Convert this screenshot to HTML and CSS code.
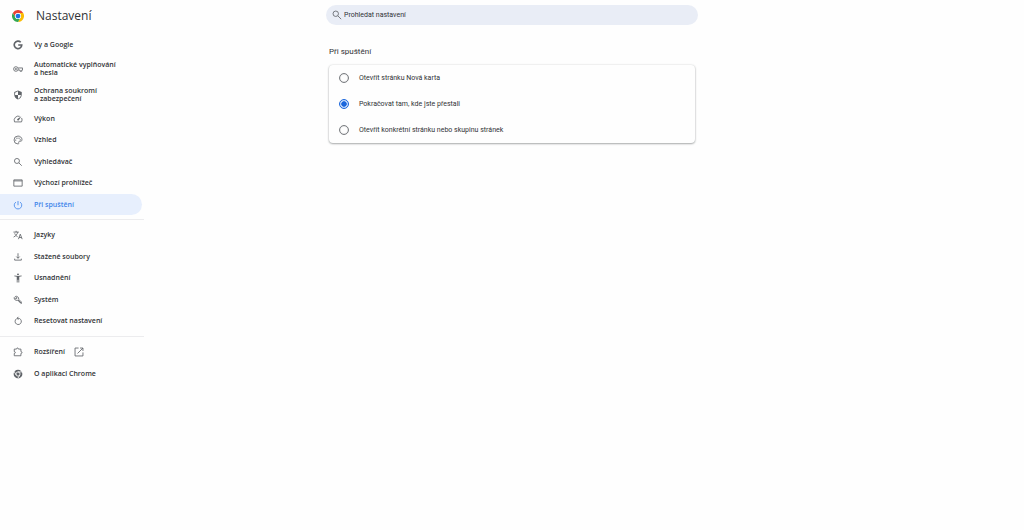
FILE: index.html
```html
<!DOCTYPE html>
<html lang="cs">
<head>
    <meta charset="UTF-8">
    <meta name="viewport" content="width=device-width, initial-scale=1.0">
    <title>Nastavení – Při spuštění</title>
    <link rel="stylesheet" href="styles.css">
</head>
<body>
    <div class="page">
        <aside class="sidebar">
            <div class="brand">
                <svg class="logo" viewBox="0 0 48 48">
                    <path fill="#ea4335" d="M3.2 12A24 24 0 0 1 44.8 12H24A12 12 0 0 0 13.6 30z"/>
                    <path fill="#fbbc04" d="M44.8 12A24 24 0 0 1 24 48L34.4 30A12 12 0 0 0 24 12z"/>
                    <path fill="#34a853" d="M24 48A24 24 0 0 1 3.2 12L13.6 30A12 12 0 0 0 34.4 30z"/>
                    <circle cx="24" cy="24" r="12" fill="#fff"/>
                    <circle cx="24" cy="24" r="9.5" fill="#1a73e8"/>
                </svg>
                <h1>Nastavení</h1>
            </div>

            <nav class="menu">
                <div class="menu-group menu-main">
                    <a href="#google" class="menu-item">
                        <svg class="icon line bold" viewBox="0 0 24 24"><path d="M18.500 5.500A9 9 0 1 0 21 12h-8.500"/></svg>
                        <span>Vy a Google</span>
                    </a>
                    <a href="#autofill" class="menu-item">
                        <svg class="icon line" viewBox="0 0 24 24"><circle cx="7" cy="12" r="5.500"/><circle cx="7" cy="12" r="1.500"/><path d="M12.500 9.500H23v5h-2v3h-4v-3h-4.500"/></svg>
                        <span>Automatické vyplňování<br>a hesla</span>
                    </a>
                    <a href="#privacy" class="menu-item">
                        <svg class="icon" viewBox="0 0 24 24"><path d="M12 1L3 5v6c0 5.550 3.840 10.740 9 12 5.160-1.260 9-6.450 9-12V5l-9-4zm0 11h7c-.53 4.100-3.280 7.800-7 8.900V12H5V6.300l7-3.100V12z"/></svg>
                        <span>Ochrana soukromí<br>a zabezpečení</span>
                    </a>
                    <a href="#performance" class="menu-item">
                        <svg class="icon line" viewBox="0 0 24 24"><path d="M16 5.600A10 10 0 0 0 3.600 19h16.800a10 10 0 0 0 .3-9.500"/><path class="solid" d="M20 5.500l-6 9.500a2.300 2.300 0 0 1-3.400-3.300z"/></svg>
                        <span>Výkon</span>
                    </a>
                    <a href="#appearance" class="menu-item">
                        <svg class="icon line" viewBox="0 0 24 24"><path d="M12 2.500a9.500 9.500 0 0 0 0 19c1.600 0 2.500-1.500 1.800-2.900-.8-1.700.2-3.600 2.200-3.600h2.500c2 0 3-1.500 3-4 0-4.800-4.300-8.500-9.500-8.500z"/><g class="solid"><circle cx="6.500" cy="12" r="1.500"/><circle cx="9.500" cy="7.500" r="1.500"/><circle cx="14.500" cy="7.500" r="1.500"/><circle cx="17.500" cy="11.500" r="1.500"/></g></svg>
                        <span>Vzhled</span>
                    </a>
                    <a href="#search" class="menu-item">
                        <svg class="icon line" viewBox="0 0 24 24"><circle cx="9.500" cy="9.500" r="6"/><path d="M14 14l7 7"/></svg>
                        <span>Vyhledávač</span>
                    </a>
                    <a href="#browser" class="menu-item">
                        <svg class="icon line" viewBox="0 0 24 24"><path d="M2 4.500h20v15H2z"/><path d="M2 7h20"/></svg>
                        <span>Výchozí prohlížeč</span>
                    </a>
                    <a href="#startup" class="menu-item active" aria-current="page">
                        <svg class="icon line" viewBox="0 0 24 24"><path d="M12 2.500v10M7 5a9 9 0 1 0 10 0"/></svg>
                        <span>Při spuštění</span>
                    </a>
                </div>

                <div class="menu-group">
                    <a href="#languages" class="menu-item">
                        <svg class="icon line" viewBox="0 0 24 24"><path d="M1 5h13M7.500 2v3M11.500 5c-1 5-4.500 9-10 12M4 8c1.500 4 4 6.500 7 8M13 22l4.500-12L22 22M14.500 18h6"/></svg>
                        <span>Jazyky</span>
                    </a>
                    <a href="#downloads" class="menu-item">
                        <svg class="icon line" viewBox="0 0 24 24"><path d="M12 3v12M8 11l4 4 4-4M4 16v3.500h16V16"/></svg>
                        <span>Stažené soubory</span>
                    </a>
                    <a href="#accessibility" class="menu-item">
                        <svg class="icon" viewBox="0 0 24 24"><path d="M20.500 6c-2.600.7-5.600 1-8.500 1s-5.900-.3-8.500-1L3 8c1.900.5 4 .8 6 1v14h2v-7h2v7h2V9c2-.2 4.100-.5 6-1zM12 5.500a2.300 2.300 0 1 0 0-4.600 2.300 2.300 0 0 0 0 4.600z"/></svg>
                        <span>Usnadnění</span>
                    </a>
                    <a href="#system" class="menu-item">
                        <svg class="icon line" viewBox="0 0 24 24"><path d="M5.500 3.500l4 4-2.500 2.500-4-4a6 6 0 0 0 8.500 6.500l7.500 8 2.500-2.500-8-7.500A6 6 0 0 0 5.500 3.500z"/><path d="M12 12l8 8"/></svg>
                        <span>Systém</span>
                    </a>
                    <a href="#reset" class="menu-item">
                        <svg class="icon line" viewBox="0 0 24 24"><path d="M8 7a7.500 7.500 0 1 0 4-1.500H9.500M13 2L9.500 5.500 13 9"/></svg>
                        <span>Resetovat nastavení</span>
                    </a>
                </div>

                <div class="menu-group">
                    <a href="#extensions" class="menu-item">
                        <svg class="icon line" viewBox="0 0 24 24"><path d="M3 5h5.500c0-3.500 4.500-3.500 4.500 0h6v6c3.500 0 3.500 4.500 0 4.500V21H3v-5.500c3.500 0 3.500-4.500 0-4.500z"/></svg>
                        <span>Rozšíření</span>
                        <svg class="icon external line" viewBox="0 0 24 24"><path d="M11 2.500H2.500v19h19V13M14.500 2.500h7v7M21.500 2.500L8.500 15.500"/></svg>
                    </a>
                    <a href="#about" class="menu-item">
                        <svg class="icon" viewBox="0 0 24 24"><circle cx="12" cy="12" r="10.500"/><g fill="none" stroke="#fefefe" stroke-width="2"><circle cx="12" cy="12" r="5"/><path d="M12 7h10M7.700 14.500L2.700 6M16.300 14.500l-5 8.500"/></g></svg>
                        <span>O aplikaci Chrome</span>
                    </a>
                </div>
            </nav>
        </aside>

        <main class="content">
            <form class="search" role="search">
                <label for="search-input" aria-label="Prohledat nastavení">
                    <svg class="icon line" viewBox="0 0 24 24"><circle cx="9" cy="9" r="6.500"/><path d="M14 14l8 8"/></svg>
                </label>
                <input type="text" id="search-input" placeholder="Prohledat nastavení">
            </form>

            <section class="startup">
                <h2>Při spuštění</h2>
                <div class="card">
                    <label class="option">
                        <input type="radio" name="startup">
                        <span>Otevřít stránku Nová karta</span>
                    </label>
                    <label class="option">
                        <input type="radio" name="startup" checked>
                        <span>Pokračovat tam, kde jste přestali</span>
                    </label>
                    <label class="option">
                        <input type="radio" name="startup">
                        <span>Otevřít konkrétní stránku nebo skupinu stránek</span>
                    </label>
                </div>
            </section>
        </main>
    </div>
</body>
</html>
```

FILE: styles.css
```css
:root {
    --accent: #1a66dc;
    --accent-light: #3f84ea;
    --active-background: #e7effd;
    --field-background: #e9edf6;
    --background: #fefefe;
    --text-primary: #303236;
    --icon-color: #5f6368;
}

* {
    box-sizing: border-box;
}

body {
    margin: 0;
    font-family: "Open Sans", "Noto Sans", sans-serif;
    font-size: 7px;
    line-height: 8px;
    background-color: var(--background);
    color: var(--text-primary);
}

.page {
    display: grid;
    grid-template-columns: 1fr minmax(auto, 372px) 1fr;
}

/* Sidebar */
.sidebar {
    width: 144px;
}

.brand {
    display: flex;
    align-items: center;
    gap: 12px;
    height: 31px;
    padding-left: 12px;
    margin-bottom: 3px;
}

.logo {
    width: 12px;
    height: 12px;
}

.brand h1 {
    margin: 0;
    font-size: 12px;
    font-weight: 500;
    line-height: 16px;
}

.menu-group {
    display: grid;
    grid-auto-rows: 22px 21px;
}

.menu-main {
    grid-template-rows: 22px 26px 26px;
    grid-auto-rows: 21px 22px;
}

.menu-group + .menu-group {
    margin-top: 4px;
    padding-top: 4px;
    border-top: 1px solid #ececee;
}

.menu-item {
    display: flex;
    align-items: center;
    gap: 11px;
    margin-right: 2px;
    padding-left: 13px;
    border-radius: 0 11px 11px 0;
    color: var(--text-primary);
    font-weight: 600;
    text-decoration: none;
}

.menu-item.active {
    background-color: var(--active-background);
    color: var(--accent-light);
}

.icon {
    flex: none;
    width: 10px;
    height: 10px;
    fill: var(--icon-color);
}

.external {
    margin-left: -2px;
}

.line {
    fill: none;
    stroke: var(--icon-color);
    stroke-width: 2;
}

.line.bold {
    stroke-width: 4;
}

.line .solid {
    fill: var(--icon-color);
    stroke: none;
}

.active .line {
    stroke: var(--accent-light);
}

/* Content */
.content {
    font-family: Roboto, "Noto Sans", sans-serif;
}

.search {
    display: flex;
    align-items: center;
    gap: 2px;
    height: 20px;
    margin-top: 5px;
    padding: 0 6px;
    border-radius: 10px;
    background-color: var(--field-background);
}

.search label {
    display: flex;
}

.search input {
    flex: 1;
    padding: 0;
    border: 0;
    outline: 0;
    background: none;
    color: var(--text-primary);
    font: inherit;
}

.search input::placeholder {
    color: var(--text-primary);
}

.startup {
    padding: 0 3px;
}

.startup h2 {
    margin: 21px 0 7px;
    font-size: 8px;
    font-weight: 400;
    line-height: 12px;
}

.card {
    border-radius: 4px;
    background-color: var(--background);
    box-shadow: 0 1px 2px rgba(60, 64, 67, 0.4), 0 0 2px rgba(60, 64, 67, 0.2);
}

.option {
    display: flex;
    align-items: center;
    gap: 10px;
    height: 26px;
    padding-left: 10px;
}

.option input {
    appearance: none;
    width: 10px;
    height: 10px;
    margin: 0;
    border: 1px solid #7a7d81;
    border-radius: 50%;
    box-shadow: inset 0 0 1px #7a7d81;
}

.option input:checked {
    border-color: var(--accent);
    background: radial-gradient(circle closest-side, var(--accent) 60%, #c4d9f8 75%);
    box-shadow: none;
}
```
